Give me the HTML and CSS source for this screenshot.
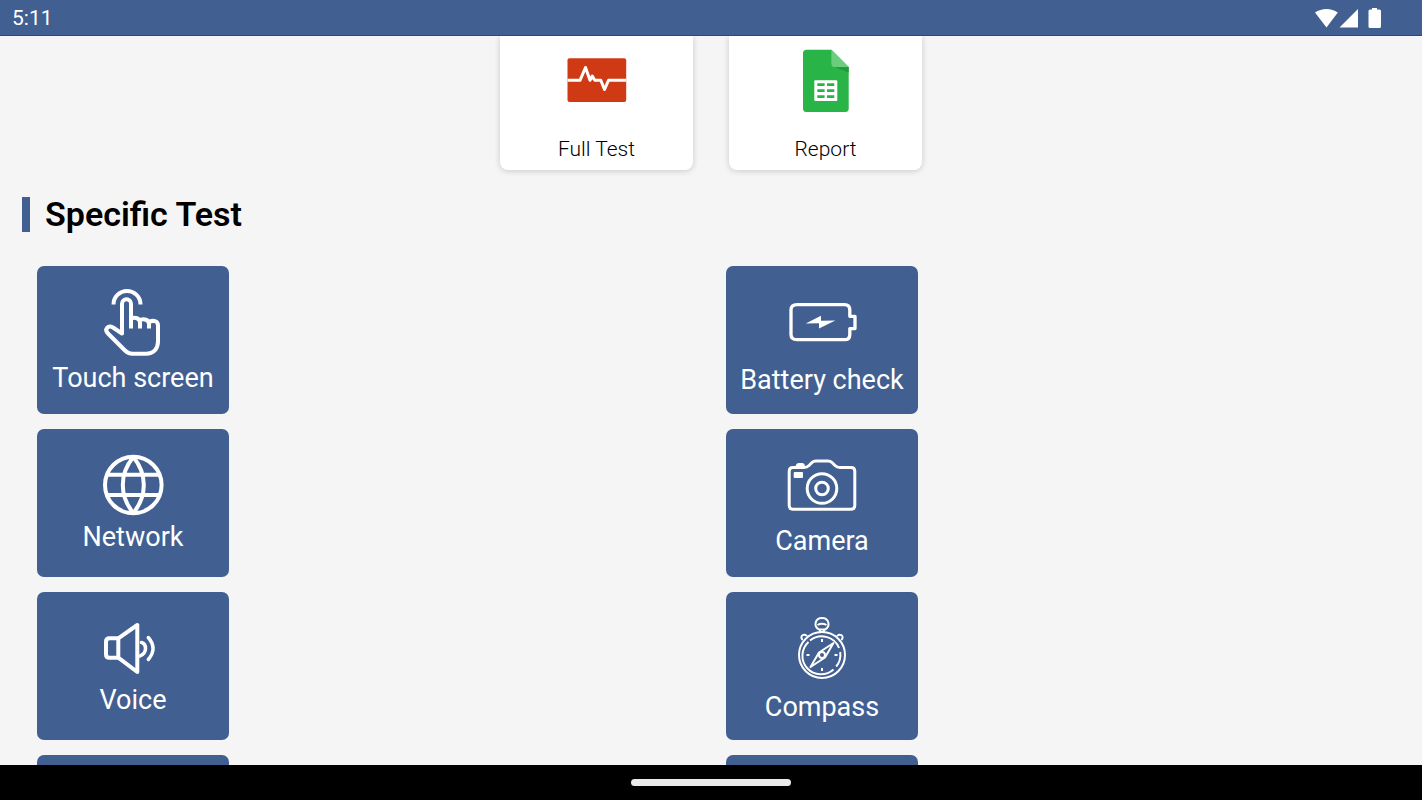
FILE: index.html
```html
<!DOCTYPE html>
<html lang="en">
<head>
    <meta charset="UTF-8">
    <meta name="viewport" content="width=device-width, initial-scale=1.0">
    <title>Specific Test</title>
    <link rel="stylesheet" href="styles.css">
</head>
<body>
    <header class="status-bar">
        <span class="time">5:11</span>
        <div class="status-icons">
            <svg width="24" height="22" viewBox="0 0 24 22"><path d="M1 5.500C7.500 .8 17.500 .8 23.800 5.500L12.500 20.500z"/></svg>
            <svg width="20" height="22" viewBox="0 0 20 22"><path d="M19 2v18.500H.5z"/></svg>
            <svg class="battery-icon" width="14" height="22" viewBox="0 0 14 22"><path d="M4 1h5v1.500h2.500q1.500 0 1.500 1.500v15.500q0 1.500-1.500 1.500h-9.500q-1.500 0-1.500-1.500v-15.500q0-1.500 1.500-1.500H4z"/></svg>
        </div>
    </header>

    <main class="content">
        <div class="cards">
            <button class="card" type="button">
                <svg width="64" height="64" viewBox="0 0 64 64">
                    <rect x="2.500" y="10.300" width="58.700" height="43.700" rx="2" fill="#cf3a14"/>
                    <path d="M2.500 32.300h12.500L20.500 19.500l4.500 12.800 2.300-4.300 2.500 4.300h6L39.500 41.500l4-9.200h17.700" fill="none" stroke="#fff" stroke-width="3" stroke-linejoin="round"/>
                </svg>
                <span>Full Test</span>
            </button>
            <button class="card" type="button">
                <svg width="64" height="64" viewBox="0 0 64 64">
                    <path d="M12.500 1.700h25L54.700 19v41.500q0 3.500-3.500 3.500H12.500Q9 64 9 60.500V5.200q0-3.500 3.500-3.500z" fill="#28b446"/>
                    <path d="M37.400 1.700L54.700 19H41q-3.600 0-3.600-3.600z" fill="#6ace7c"/>
                    <path d="M40.500 19h14.200v5.500z" fill="#219b38"/>
                    <rect x="20.300" y="32.300" width="23" height="20.700" rx="1" fill="#fff"/>
                    <path d="M23.300 35.300h7.300v2.700h-7.300zM33 35.300h7.300v2.700H33zM23.300 41.300h7.300v2.700h-7.300zM33 41.300h7.300v2.700H33zM23.300 47.200h7.300v2.700h-7.300zM33 47.200h7.300v2.700H33z" fill="#28b446"/>
                </svg>
                <span>Report</span>
            </button>
        </div>

        <h2 class="section-title">Specific Test</h2>

        <div class="tiles">
            <button class="tile touch" type="button">
                <svg viewBox="0 0 80 76" stroke-width="4">
                    <path d="M20.500 17.500a13.500 13.500 0 0 1 27 0"/>
                    <path d="M38 41.500V16.800a4.500 4.500 0 0 0-9 0V46.500L20 40.500c-5-3-9 2-5 6L32 63.500c2.500 2.400 4 3.200 7 3.200H53c7.500 0 12-5 12-12.200V38.500c0-5-5.200-5.500-9-3.500"/>
                    <path d="M38 31.500c4-1.500 9-.5 9 4v6M47 33c4-1.500 9-.5 9 4v4.500"/>
                </svg>
                <span>Touch screen</span>
            </button>
            <button class="tile battery" type="button">
                <svg viewBox="0 0 80 80" stroke-width="3.300">
                    <path d="M15 19.700H62.500q5.300 0 5.300 5.300v6.300H73v12.300H67.800V49.400q0 5.300-5.300 5.300H15Q9 54.700 9 49.400V25q0-5.300 6-5.300z"/>
                    <path class="solid" d="M23.700 38.500L39 30.800v4.900l14.400-.2L37 43.600v-5.300z"/>
                </svg>
                <span>Battery check</span>
            </button>
            <button class="tile network" type="button">
                <svg viewBox="0 0 80 68" stroke-width="4">
                    <circle cx="40.300" cy="31" r="28.300"/>
                    <path d="M40.300 3C26.300 20 26.300 42 40.300 59M40.300 3c14 17 14 39 0 56M14.300 20.700h52M14.300 41h52"/>
                </svg>
                <span>Network</span>
            </button>
            <button class="tile camera" type="button">
                <svg viewBox="0 0 80 76" stroke-width="3">
                    <path d="M11 17.500H22q3 0 5-2l3-3q1.500-1.500 4-1.500h12q2.500 0 4 1.500l3 3q2 2 5 2H69q3.800 0 3.800 3.800V55.400q0 3.800-3.800 3.800H11q-3.800 0-3.800-3.800V21.300q0-3.800 3.800-3.800z"/>
                    <circle cx="40" cy="38.500" r="14.800"/>
                    <circle cx="40" cy="38.500" r="6.300"/>
                    <rect class="solid" x="11.700" y="22" width="9.300" height="6" rx="1"/>
                    <path class="solid" d="M13.500 17.500q0-4.500 3.500-4.500h3q3 0 3 4z"/>
                </svg>
                <span>Camera</span>
            </button>
            <button class="tile voice" type="button">
                <svg viewBox="0 0 80 68" stroke-width="4">
                    <path d="M25.300 21.300H16.500q-3.500 0-3.500 3.500v12.400q0 3.500 3.500 3.500h8.800zL44.300 8v47L25.300 40.700"/>
                    <path d="M48.500 25.500q4 1 4 6t-5.500 7.500M55.300 20.500q9.500 11 0 22" stroke-linecap="round" stroke-width="3.500"/>
                </svg>
                <span>Voice</span>
            </button>
            <button class="tile compass" type="button">
                <svg viewBox="0 0 80 82" stroke-width="2">
                    <circle cx="40" cy="45" r="23"/>
                    <path d="M28 30.500a18.500 18.500 0 0 1 29 7.500M58.200 42a18.500 18.500 0 0 1-4 14.500M51.500 59.500A18.500 18.500 0 0 1 26.500 32"/>
                    <path d="M37 19.500C31.500 17 32.500 8 40 8s8.500 9 3 11.500zM35.500 15q4.500-2.500 9 0M38 19v3.500M42 19v3.500"/>
                    <path d="M20.700 30c-4-4 2-7.500 4.300-3.700M59.300 30c4-4-2-7.500-4.300-3.700"/>
                    <path d="M51.500 33L43 47.500 28.500 57 37 42.500z"/>
                    <circle cx="40" cy="45" r="3"/>
                    <path d="M40 29v3M40 58v3M24.500 45h3M52.500 45h3"/>
                </svg>
                <span>Compass</span>
            </button>
            <!-- next row, continues below the navigation bar -->
            <button class="tile" type="button" aria-label="More tests"></button>
            <button class="tile" type="button" aria-label="More tests"></button>
        </div>
    </main>

    <footer class="nav-bar"><div class="handle"></div></footer>
</body>
</html>
```
FILE: styles.css
```css
* {
    box-sizing: border-box;
}

body {
    margin: 0;
    height: 100vh;
    display: flex;
    flex-direction: column;
    overflow: hidden;
    background-color: #f5f5f5;
    font-family: Roboto, sans-serif;
    color: #000;
}

button {
    font-family: inherit;
    border: none;
    padding: 0;
    cursor: pointer;
}

/* Status bar */
.status-bar {
    flex: none;
    height: 36px;
    padding: 0 40px 0 12px;
    display: flex;
    align-items: center;
    justify-content: space-between;
    background-color: #415f91;
    border-bottom: 1px solid #1c4c8a;
    color: #fff;
}

.time {
    font-size: 21px;
    line-height: 36px;
}

.status-icons {
    display: flex;
    gap: 1px;
}

.status-icons svg {
    fill: #fff;
}

.battery-icon {
    margin-left: 8px;
}

.content {
    flex: 1;
    min-height: 0;
    overflow: hidden;
}

.cards {
    display: flex;
    justify-content: center;
    gap: 36px;
}

.card {
    width: 193px;
    padding: 12px 0 8px;
    display: flex;
    flex-direction: column;
    align-items: center;
    gap: 24px;
    background-color: #fff;
    border-radius: 0 0 8px 8px;
    box-shadow: 0 1px 6px rgba(0, 0, 0, 0.18);
    font-size: 21px;
    line-height: 26px;
    font-weight: 300;
    color: #000;
}

.section-title {
    margin: 27px 22px 34px;
    padding-left: 15px;
    border-left: 8px solid #415f91;
    font-size: 34px;
    line-height: 35px;
    font-weight: 600;
}

/* Test tiles */
.tiles {
    display: grid;
    grid-template-columns: 1fr 1fr;
    row-gap: 15px;
    padding: 0 22px;
}

.tile {
    width: 192px;
    height: 148px;
    margin-left: 15px;
    display: flex;
    flex-direction: column;
    align-items: center;
    justify-content: center;
    background-color: #415f91;
    border-radius: 7px;
    font-size: 27px;
    line-height: 31px;
    color: #fff;
}

.tile svg {
    width: 80px;
    fill: none;
    stroke: #fff;
    stroke-linejoin: round;
}

.tile .solid {
    fill: #fff;
    stroke: none;
}

.touch svg,
.camera svg {
    height: 76px;
}

.battery svg {
    height: 80px;
}

.network svg,
.voice svg {
    height: 68px;
}

.compass svg {
    height: 82px;
}

/* Navigation bar */
.nav-bar {
    flex: none;
    height: 35px;
    display: flex;
    align-items: center;
    justify-content: center;
    background-color: #000;
}

.handle {
    width: 160px;
    height: 7px;
    border-radius: 4px;
    background-color: #ebebeb;
}
```
